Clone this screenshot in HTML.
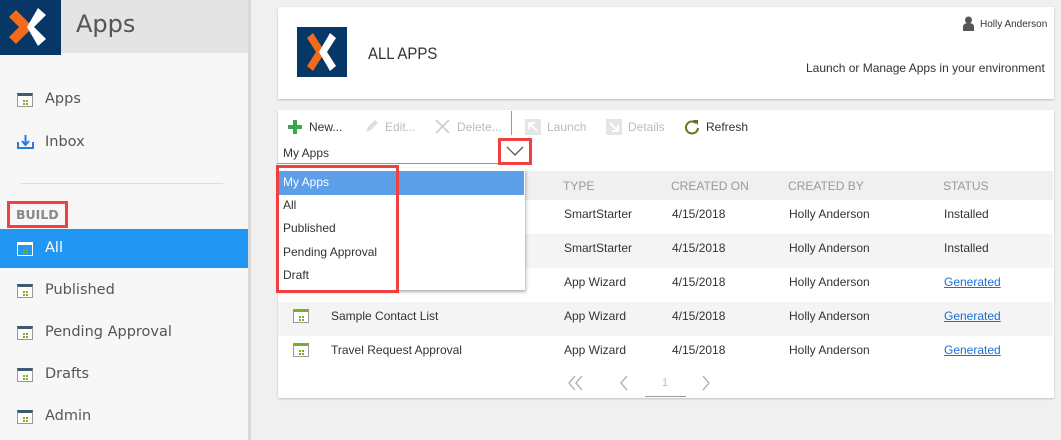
<!DOCTYPE html>
<html><head><meta charset="utf-8"><style>
*{margin:0;padding:0;box-sizing:border-box}
body{width:1061px;height:440px;overflow:hidden;background:#f0f0f0;font-family:"Liberation Sans",Arial,sans-serif;position:relative;color:#333}
.a{position:absolute}
.side{left:0;top:0;width:248px;height:440px;background:#f7f7f7}
.sb{left:248px;top:0;width:3px;height:440px;background:#d9d9d9}
.nav{left:0;width:248px;height:40px;font-family:"DejaVu Sans",sans-serif;font-size:14.5px;color:#555;line-height:40px;padding-left:45px}
.ic{position:absolute;left:17px;top:14px;width:16px;height:14px;border:1px solid #999;border-top:3px solid #3d5a6e;background:#fff}
.ic:after{content:"";position:absolute;left:5px;top:4px;width:2px;height:2px;background:#7cac2c;box-shadow:3px 0 #7cac2c,0 3px #7cac2c,3px 3px #7cac2c}
.card{background:#fff;box-shadow:0 1px 2px rgba(0,0,0,.2)}
.t{font-size:12px;color:#333;white-space:nowrap}
.row{left:278px;width:775px;height:34px}
.cell{position:absolute;top:0;line-height:28px;font-size:12px;color:#333;white-space:nowrap}
.gen{color:#1a6fd6;text-decoration:underline}
.dd{font-size:12px;line-height:23.5px;padding-left:6px;color:#333}
.rb{border:3px solid #f04040}
</style></head><body>
<div class="a side"></div>
<div class="a" style="left:0;top:0;width:248px;height:53px;background:#e4e4e4"></div>
<div class="a" style="left:0;top:0;width:61px;height:55px;background:#063767"></div>
<svg class="a" style="left:0;top:0" width="61" height="55" viewBox="0 0 61 55"><polygon points="9,17 16,10 33,27 16,44 9,37 19,27" fill="#f26a1b"/><polygon points="38,8 46,15 34,27 46,39 38,46 27,27" fill="#fff"/></svg>
<div class="a" style="left:76px;top:10px;font-family:'DejaVu Sans',sans-serif;font-size:24px;color:#555">Apps</div>
<div class="a sb"></div>
<div class="a nav" style="top:79px"><span class="ic"></span>Apps</div>
<div class="a nav" style="top:122px"><svg style="position:absolute;left:17px;top:12px" width="17" height="16"><path d="M1 8v6h15V8" stroke="#2a7ad8" stroke-width="2" fill="none"/><path d="M8.5 1v9M5 7l3.5 4 3.5-4" stroke="#2a7ad8" stroke-width="2" fill="none"/></svg>Inbox</div>
<div class="a" style="left:21px;top:183px;width:202px;height:1px;background:#ddd"></div>
<div class="a rb" style="left:7px;top:201px;width:61px;height:27px"></div>
<div class="a" style="left:16px;top:207px;font-family:'DejaVu Sans',sans-serif;font-weight:bold;font-size:12.5px;color:#888">BUILD</div>
<div class="a nav" style="top:229px;height:39px;background:#2196f3;color:#fff;line-height:39px"><span class="ic" style="border-color:#fff;background:#2196f3;top:13px"></span>All</div>
<div class="a nav" style="top:270px"><span class="ic"></span>Published</div>
<div class="a nav" style="top:312px"><span class="ic"></span>Pending Approval</div>
<div class="a nav" style="top:354px"><span class="ic"></span>Drafts</div>
<div class="a nav" style="top:396px"><span class="ic"></span>Admin</div>

<div class="a card" style="left:278px;top:7px;width:776px;height:92px"></div>
<div class="a" style="left:297px;top:27px;width:50px;height:50px;background:#063767"></div>
<svg class="a" style="left:297px;top:27px" width="50" height="50" viewBox="0 0 50 50"><polygon points="10,11 16,6 28,25 16,44 10,39 19,25" fill="#f26a1b"/><polygon points="33,6 39,11 30,25 39,39 33,44 22,25" fill="#fff"/></svg>
<div class="a" style="left:368px;top:44px;font-size:17px;color:#333;transform:scaleX(.88);transform-origin:left">ALL APPS</div>
<svg class="a" style="left:963px;top:16px" width="11" height="15"><circle cx="5.5" cy="4" r="3.5" fill="#555"/><path d="M0 15V11q0-4 5.5-4T11 11v4z" fill="#555"/></svg>
<div class="a" style="left:980px;top:19px;font-size:10px;color:#333">Holly Anderson</div>
<div class="a" style="left:806px;top:61px;font-size:12px;color:#333">Launch or Manage Apps in your environment</div>

<div class="a card" style="left:278px;top:110px;width:776px;height:288px"></div>
<svg class="a" style="left:287px;top:119px" width="16" height="16"><path d="M8 1v14M1 8h14" stroke="#3aa84a" stroke-width="4"/></svg>
<div class="a t" style="left:309px;top:120px">New...</div>
<svg class="a" style="left:364px;top:119px" width="15" height="15"><path d="M2 13l2-5 7-7 3 3-7 7z" fill="#ddd"/></svg>
<div class="a t" style="left:385px;top:120px;color:#bbb">Edit...</div>
<svg class="a" style="left:435px;top:119px" width="15" height="15"><path d="M1 1l13 13M14 1L1 14" stroke="#ccc" stroke-width="1.6"/></svg>
<div class="a t" style="left:457px;top:120px;color:#bbb">Delete...</div>
<div class="a" style="left:511px;top:111px;width:1px;height:24px;background:#999"></div>
<svg class="a" style="left:525px;top:119px" width="16" height="16"><rect width="16" height="16" fill="#e5e5e5"/><path d="M4 4h6M4 4v6M4 4l8 8" stroke="#fff" stroke-width="2"/></svg>
<div class="a t" style="left:547px;top:120px;color:#bbb">Launch</div>
<svg class="a" style="left:606px;top:119px" width="16" height="16"><rect width="16" height="16" fill="#e5e5e5"/><path d="M12 12H6M12 12V6M12 12L4 4" stroke="#fff" stroke-width="2"/></svg>
<div class="a t" style="left:628px;top:120px;color:#bbb">Details</div>
<svg class="a" style="left:684px;top:118px" width="16" height="17"><path d="M12 5A6 6 0 1 0 14 10" stroke="#5a7a1a" stroke-width="2" fill="none"/><path d="M9 2l5 0 0 5z" fill="#5a7a1a"/></svg>
<div class="a t" style="left:706px;top:120px">Refresh</div>

<div class="a t" style="left:283px;top:146px">My Apps</div>
<div class="a" style="left:277px;top:163px;width:221px;height:1px;background:#5c9ee8"></div>
<div class="a rb" style="left:498px;top:138px;width:34px;height:27px"></div>
<svg class="a" style="left:506px;top:146px" width="18" height="10"><path d="M1 1l8 8 8-8" stroke="#555" stroke-width="1.3" fill="none"/></svg>

<div class="a" style="left:278px;top:171px;width:775px;height:29px;background:#f0f0f0"></div>
<div class="a" style="left:278px;top:234px;width:775px;height:34px;background:#f4f4f4"></div>
<div class="a" style="left:278px;top:302px;width:775px;height:34px;background:#f4f4f4"></div>
<div class="a t" style="left:563px;top:179px;color:#999">TYPE</div>
<div class="a t" style="left:671px;top:179px;color:#999">CREATED ON</div>
<div class="a t" style="left:788px;top:179px;color:#999">CREATED BY</div>
<div class="a t" style="left:943px;top:179px;color:#999">STATUS</div>

<div class="a row" style="top:200px"><span class="cell" style="left:286px">SmartStarter</span><span class="cell" style="left:394px">4/15/2018</span><span class="cell" style="left:511px">Holly Anderson</span><span class="cell" style="left:666px">Installed</span></div>
<div class="a row" style="top:234px"><span class="cell" style="left:286px">SmartStarter</span><span class="cell" style="left:394px">4/15/2018</span><span class="cell" style="left:511px">Holly Anderson</span><span class="cell" style="left:666px">Installed</span></div>
<div class="a row" style="top:268px"><span class="cell" style="left:286px">App Wizard</span><span class="cell" style="left:394px">4/15/2018</span><span class="cell" style="left:511px">Holly Anderson</span><span class="cell gen" style="left:666px">Generated</span></div>
<div class="a row" style="top:302px"><span class="ic" style="left:15px;top:7px;border-top-color:#7cac2c"></span><span class="cell" style="left:53px">Sample Contact List</span><span class="cell" style="left:286px">App Wizard</span><span class="cell" style="left:394px">4/15/2018</span><span class="cell" style="left:511px">Holly Anderson</span><span class="cell gen" style="left:666px">Generated</span></div>
<div class="a row" style="top:336px"><span class="ic" style="left:15px;top:7px;border-top-color:#7cac2c"></span><span class="cell" style="left:53px">Travel Request Approval</span><span class="cell" style="left:286px">App Wizard</span><span class="cell" style="left:394px">4/15/2018</span><span class="cell" style="left:511px">Holly Anderson</span><span class="cell gen" style="left:666px">Generated</span></div>

<svg class="a" style="left:566px;top:375px" width="20" height="16"><path d="M9 1L3 8l6 7M16 1l-6 7 6 7" stroke="#aaa" stroke-width="1.3" fill="none"/></svg>
<svg class="a" style="left:619px;top:375px" width="10" height="16"><path d="M8 1L2 8l6 7" stroke="#aaa" stroke-width="1.3" fill="none"/></svg>
<div class="a" style="left:662px;top:377px;font-size:11px;color:#bbb">1</div>
<div class="a" style="left:645px;top:396px;width:41px;height:1px;background:#999"></div>
<svg class="a" style="left:701px;top:375px" width="10" height="16"><path d="M2 1l6 7-6 7" stroke="#aaa" stroke-width="1.3" fill="none"/></svg>

<div class="a" style="left:277px;top:168px;width:248px;height:122px;background:#fff;box-shadow:1px 2px 3px rgba(0,0,0,.3)"></div>
<div class="a dd" style="left:277px;top:171px;width:247px;background:#5c9ee8;color:#fff">My Apps</div>
<div class="a dd" style="left:277px;top:194px">All</div>
<div class="a dd" style="left:277px;top:217px">Published</div>
<div class="a dd" style="left:277px;top:241px">Pending Approval</div>
<div class="a dd" style="left:277px;top:264px">Draft</div>
<div class="a rb" style="left:276px;top:165px;width:123px;height:128px"></div>
</body></html>
